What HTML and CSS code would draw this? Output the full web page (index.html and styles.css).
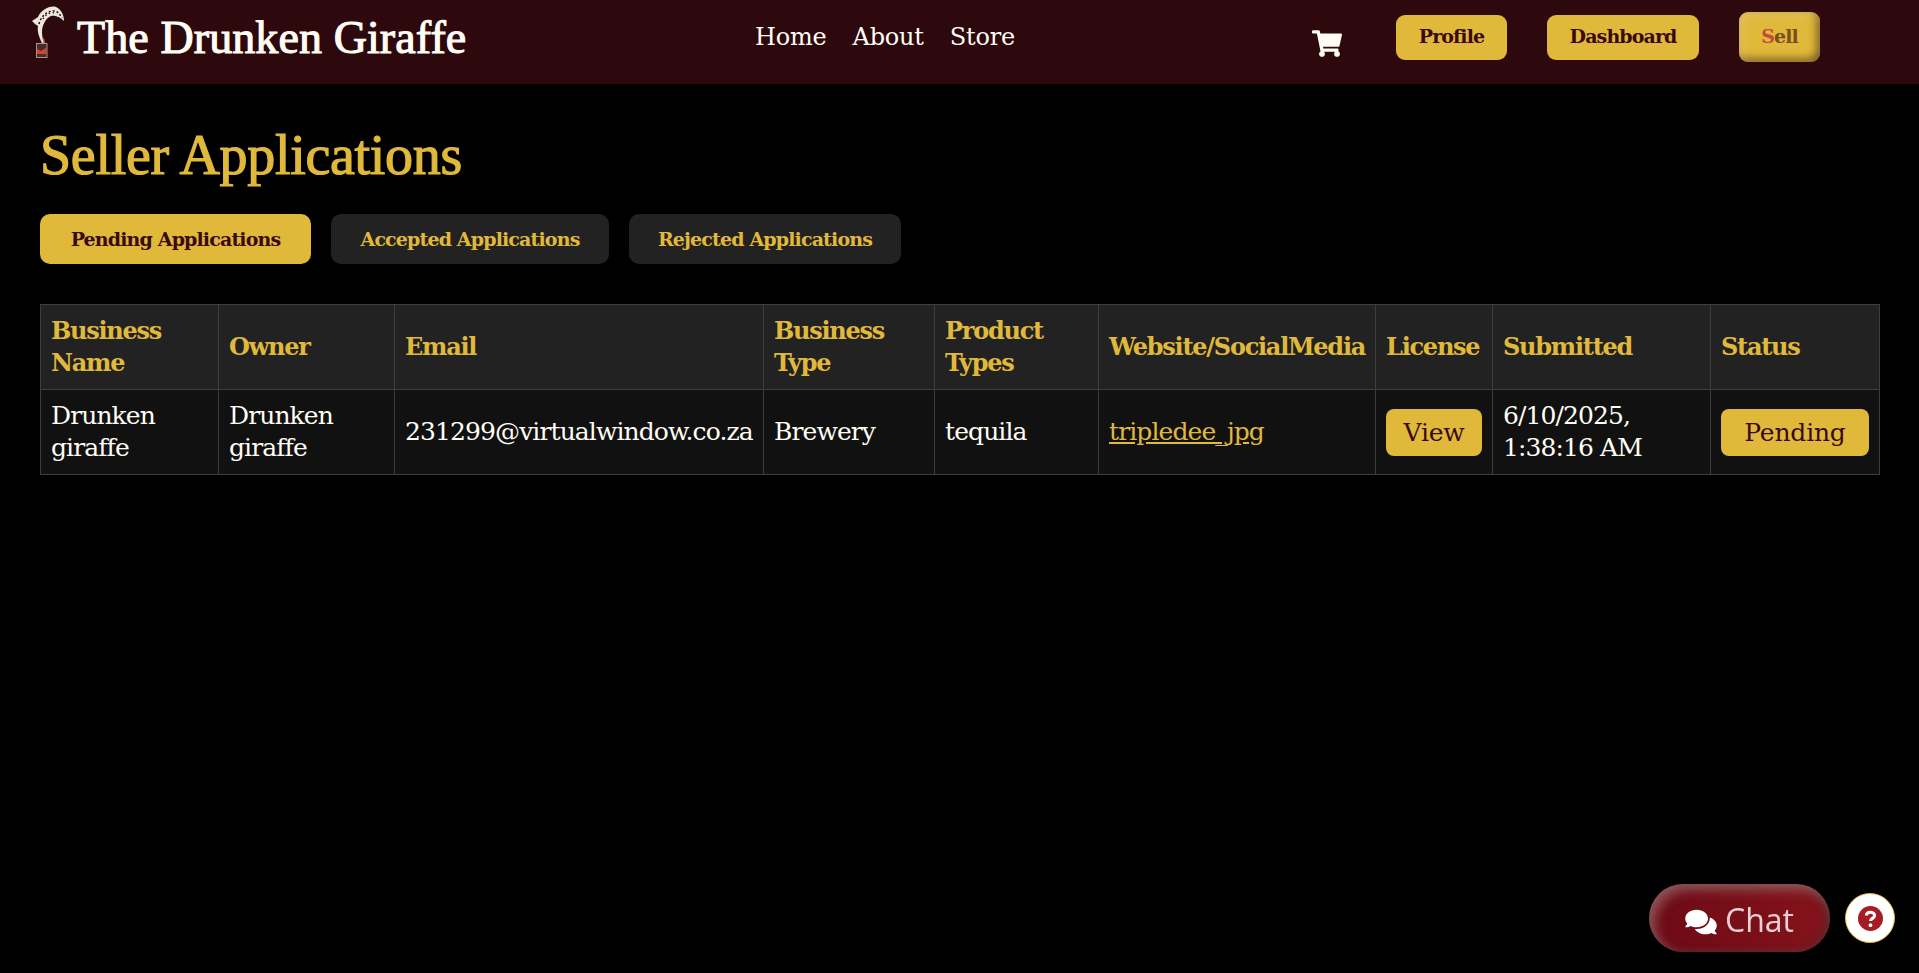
FILE: index.html
```html
<!DOCTYPE html>
<html lang="en">
  <head>
    <meta charset="utf-8">
    <title>Seller Applications</title>
    <link rel="stylesheet" href="styles.css">
  </head>
  <body>
    <header class="navbar">
      <a class="brand" href="#">
        <svg class="brand-logo" viewBox="0 0 50 64" width="50" height="64">
          <path d="M8 21 L14 17 C17 10 26 5 32 7 C37 9 40 15 40 21 C37 18 32 15 27 16 C22 18 18 25 18 32 C18 36 19 40 20 43 L18 43 C15 37 13 31 14 26 C12 25 10 23 8 21 Z" fill="#ece8e0"/>
          <path d="M15 24 C17 16 23 11 30 11 C33 11 36 14 38 18" fill="none" stroke="#2d080d" stroke-width="1.5" stroke-dasharray="2 2"/>
          <path d="M19 19 C22 14 26 12 31 13" fill="none" stroke="#2d080d" stroke-width="1.2" stroke-dasharray="1.5 2.5"/>
          <path d="M19 38 C20 41 22 44 21 50" fill="none" stroke="#c9553f" stroke-width="1.5"/>
          <rect x="12.5" y="43.5" width="10.5" height="14" fill="#4a2a2c" stroke="#a8938e" stroke-width="1"/>
          <path d="M13 49 L17 51 L22 48 L22 54 L13 54 Z" fill="#d2472c"/>
        </svg>
        <span class="brand-name">The Drunken Giraffe</span>
      </a>
      <nav class="nav-links">
        <a href="#">Home</a>
        <a href="#">About</a>
        <a href="#">Store</a>
      </nav>
      <div class="nav-actions">
        <svg class="cart" viewBox="0 0 576 512" width="30" height="27">
          <path fill="#fffdf4" d="M528.12 301.319l47.273-208C578.806 78.301 567.391 64 551.99 64H159.208l-9.166-44.81C147.758 8.021 137.93 0 126.529 0H24C10.745 0 0 10.745 0 24v16c0 13.255 10.745 24 24 24h69.883l70.248 343.435C147.325 417.1 136 435.222 136 456c0 30.928 25.072 56 56 56s56-25.072 56-56c0-15.674-6.447-29.835-16.824-40h209.647C430.447 426.165 424 440.326 424 456c0 30.928 25.072 56 56 56s56-25.072 56-56c0-22.172-12.888-41.332-31.579-50.405l5.517-24.276c3.413-15.018-8.002-29.319-23.403-29.319H218.117l-6.545-32h293.145c11.206 0 20.92-7.754 23.403-18.681z"/>
        </svg>
        <a class="nav-btn btn-profile" href="#">Profile</a>
        <a class="nav-btn btn-dashboard" href="#">Dashboard</a>
        <a class="nav-btn btn-sell" href="#"><span class="sell-s">S</span>ell</a>
      </div>
    </header>

    <main class="content">
      <h1>Seller Applications</h1>
      <div class="tabs">
        <button class="tab tab-active">Pending Applications</button>
        <button class="tab">Accepted Applications</button>
        <button class="tab">Rejected Applications</button>
      </div>

      <table class="apps">
        <thead>
          <tr>
            <th class="col-name">Business Name</th>
            <th class="col-owner">Owner</th>
            <th class="col-email">Email</th>
            <th class="col-type">Business Type</th>
            <th class="col-products">Product Types</th>
            <th class="col-site">Website/SocialMedia</th>
            <th class="col-license">License</th>
            <th class="col-date">Submitted</th>
            <th class="col-status">Status</th>
          </tr>
        </thead>
        <tbody>
          <tr>
            <td>Drunken giraffe</td>
            <td>Drunken giraffe</td>
            <td>231299@virtualwindow.co.za</td>
            <td>Brewery</td>
            <td>tequila</td>
            <td><a class="site-link" href="#">tripledee_jpg</a></td>
            <td><button class="cell-btn">View</button></td>
            <td>6/10/2025, 1:38:16 AM</td>
            <td><button class="cell-btn">Pending</button></td>
          </tr>
        </tbody>
      </table>
    </main>

    <div class="floaters">
      <button class="chat">
        <svg class="chat-icon" viewBox="0 0 576 512" width="32" height="28">
          <path fill="#fff" d="M416 192c0-88.4-93.1-160-208-160S0 103.6 0 192c0 34.3 14.1 65.9 38 92-13.4 30.2-35.5 54.2-35.8 54.5-2.2 2.3-2.8 5.7-1.5 8.7S4.8 352 8 352c36.6 0 66.9-12.3 88.7-25 32.2 15.7 70.3 25 111.3 25 114.9 0 208-71.6 208-160zm122 220c23.9-26 38-57.7 38-92 0-66.9-53.5-124.2-129.3-148.1.9 6.6 1.3 13.3 1.3 20.1 0 105.9-107.7 192-240 192-10.8 0-21.3-.8-31.7-1.9C207.8 439.6 281.8 480 368 480c41 0 79.1-9.2 111.3-25 21.8 12.7 52.1 25 88.7 25 3.2 0 6.1-1.9 7.3-4.8 1.3-2.9.7-6.3-1.5-8.7-.3-.3-22.4-24.2-35.8-54.5z"/>
        </svg>
        <span class="chat-label">Chat</span>
      </button>
      <button class="help">
        <svg viewBox="0 0 512 512" width="25" height="25">
          <circle cx="256" cy="256" r="256" fill="#a51c24"/>
          <path fill="none" stroke="#fff" stroke-width="62" d="M172 196c0-42 38-66 84-66s84 26 84 66c0 58-84 56-84 110"/>
          <circle cx="256" cy="392" r="38" fill="#fff"/>
        </svg>
      </button>
    </div>
  </body>
</html>
```

FILE: styles.css
```css
/* reset/general */
* { box-sizing: border-box; }
html, body { height: 100%; }
body {
  margin: 0;
  background: #000;
  color: #fffdf4;
  font-family: "DejaVu Serif", "Liberation Serif", serif;
}
a { text-decoration: none; color: inherit; }
button { font-family: inherit; border: 0; cursor: pointer; }

/* navbar */
.navbar {
  display: flex;
  align-items: center;
  height: 84px;
  background: #2d080d;
  padding: 0 0 10px 24px;
}
.brand { display: flex; align-items: center; width: 731px; gap: 3px; }
.brand-logo { margin-bottom: 10px; }
.brand-name {
  font-family: "Liberation Serif", serif;
  font-size: 46px;
  letter-spacing: 0.1px;
  -webkit-text-stroke: 1.1px #fffdf4;
  color: #fffdf4;
}
.nav-links { display: flex; gap: 26px; font-size: 24px; width: 557px; letter-spacing: -0.2px; }
.nav-actions { display: flex; align-items: center; }
.cart { margin-top: 12px; }
.nav-btn {
  display: block;
  background: #e0b93b;
  color: #3a0a10;
  border-radius: 9px;
  height: 45px;
  line-height: 43px;
  font-size: 19px;
  font-weight: 700;
  letter-spacing: -0.9px;
  text-align: center;
}
.btn-profile { width: 111px; margin-left: 54px; }
.btn-dashboard { width: 152px; margin-left: 40px; }
.btn-sell {
  width: 81px;
  height: 50px;
  line-height: 48px;
  margin-left: 40px;
  color: #7a4e1a;
  box-shadow: inset 3px 3px 8px rgba(255, 240, 200, .3), inset -3px -3px 8px rgba(70, 45, 20, .7);
}
.sell-s { color: #c2493f; }

/* page content */
.content { padding: 0 39px 0 40px; }
h1 {
  font-family: "Liberation Serif", serif;
  font-size: 56px;
  line-height: 64px;
  font-weight: 400;
  letter-spacing: -0.3px;
  -webkit-text-stroke: 1.2px #e0b93b;
  color: #e0b93b;
  margin: 39px 0 27px;
}
.tabs { display: flex; gap: 20px; margin-bottom: 40px; }
.tab {
  height: 50px;
  padding: 0;
  border-radius: 10px;
  background: #222;
  color: #e0b93b;
  font-size: 19px;
  font-weight: 700;
  letter-spacing: -0.85px;
}
.tab:nth-child(1) { width: 271px; }
.tab:nth-child(2) { width: 278px; }
.tab:nth-child(3) { width: 272px; }
.tab-active { background: #e0b93b; color: #3a0a10; }

/* table */
.apps {
  width: 1839px;
  table-layout: fixed;
  border-collapse: collapse;
  font-size: 25px;
  line-height: 32px;
}
.apps th, .apps td {
  border: 1px solid #3d3d3d;
  padding: 10px;
  text-align: left;
  height: 85px;
}
.apps th { background: #222; color: #e0b93b; font-size: 24px; letter-spacing: -1.25px; }
.apps td { background: #111; letter-spacing: -0.9px; }
.col-name { width: 178px; }
.col-owner { width: 176px; }
.col-email { width: 369px; }
.col-type { width: 171px; }
.col-products { width: 164px; }
.col-site { width: 277px; }
.col-license { width: 117px; }
.col-date { width: 218px; }
.col-status { width: 169px; }
.site-link { color: #e0b93b; text-decoration: underline; }
.cell-btn {
  display: block;
  height: 47px;
  width: 100%;
  padding: 0;
  border-radius: 8px;
  background: #e0b93b;
  color: #3a0a10;
  font-size: 25px;
  letter-spacing: -0.2px;
}

/* chat + help, stay over the page */
.floaters {
  position: fixed;
  right: 24px;
  bottom: 21px;
  display: flex;
  align-items: center;
  gap: 15px;
}
.chat {
  display: flex;
  align-items: center;
  justify-content: center;
  gap: 8px;
  width: 181px;
  height: 68px;
  border-radius: 34px;
  background: linear-gradient(90deg, #6c0a14, #85131c);
  box-shadow: inset 6px 6px 12px rgba(170, 140, 140, .55), inset -4px 0 10px rgba(60, 50, 50, .6);
  color: #e8d0d2;
  font-family: "Open Sans", sans-serif;
  font-size: 32px;
}
.chat-icon { margin-top: 7px; }
.chat-label { margin-top: 3px; }
.help {
  display: flex;
  align-items: center;
  justify-content: center;
  width: 50px;
  height: 50px;
  padding: 0;
  border-radius: 50%;
  background: #fff;
  border: 1px solid #e0b93b;
}
```
